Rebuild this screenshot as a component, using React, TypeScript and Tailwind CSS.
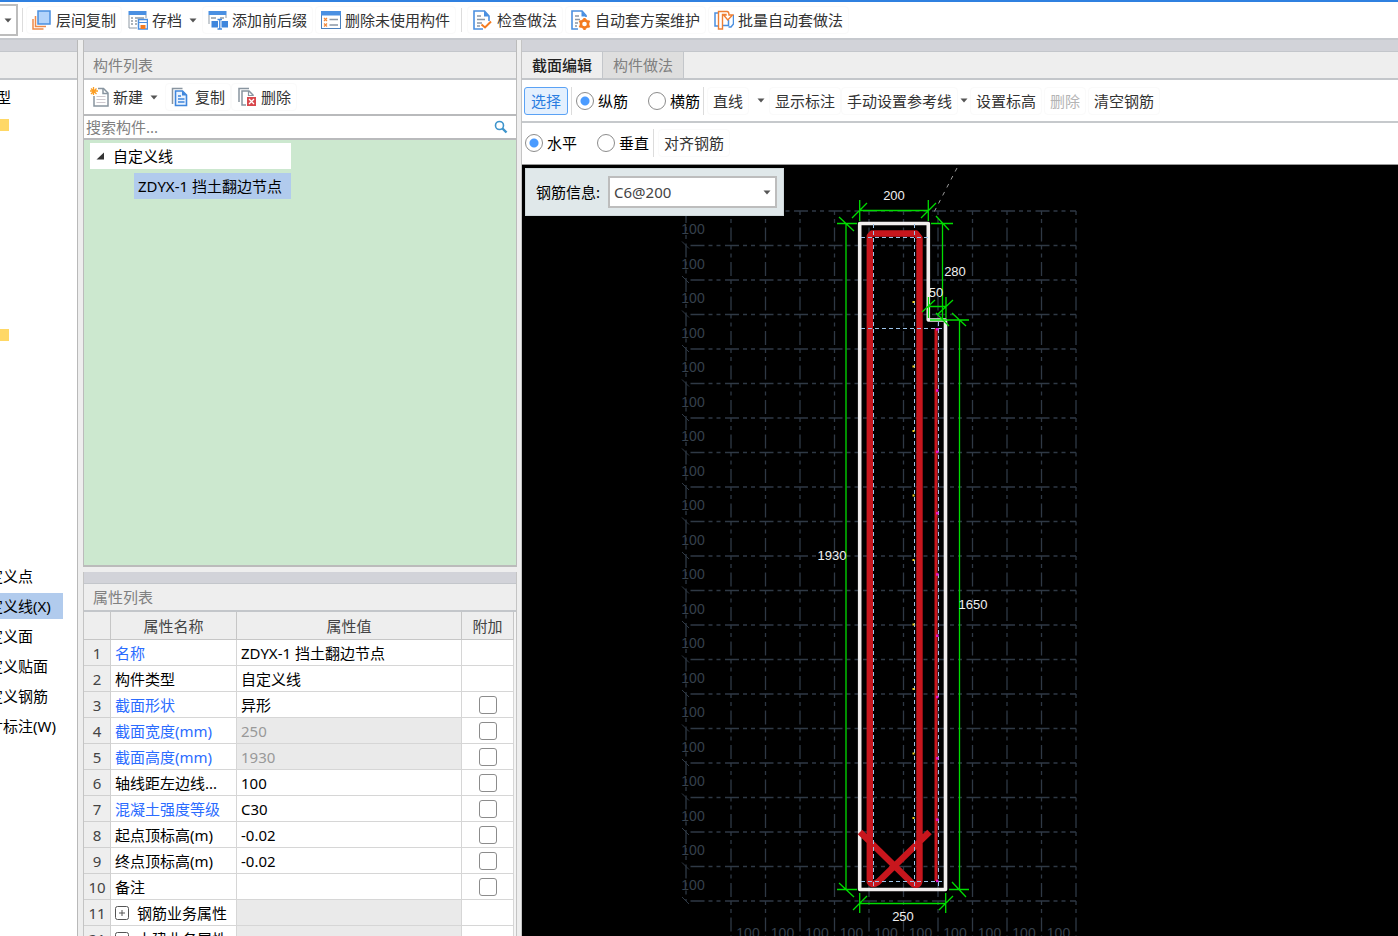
import { useState } from "react";
import type { ReactNode } from "react";

interface Property {
  id: number;
  name: string;
  value?: string;
  linked?: boolean;
  readOnly?: boolean;
  extra?: boolean;
  group?: boolean;
}

const properties: Property[] = [
  { id: 1, name: "名称", value: "ZDYX-1 挡土翻边节点", linked: true },
  { id: 2, name: "构件类型", value: "自定义线" },
  { id: 3, name: "截面形状", value: "异形", linked: true, extra: true },
  { id: 4, name: "截面宽度(mm)", value: "250", linked: true, readOnly: true, extra: true },
  { id: 5, name: "截面高度(mm)", value: "1930", linked: true, readOnly: true, extra: true },
  { id: 6, name: "轴线距左边线...", value: "100", extra: true },
  { id: 7, name: "混凝土强度等级", value: "C30", linked: true, extra: true },
  { id: 8, name: "起点顶标高(m)", value: "-0.02", extra: true },
  { id: 9, name: "终点顶标高(m)", value: "-0.02", extra: true },
  { id: 10, name: "备注", extra: true },
  { id: 11, name: "钢筋业务属性", group: true, readOnly: true },
  { id: 21, name: "土建业务属性", group: true, readOnly: true },
];

const customTypes = ["定义点", "定义线(X)", "定义面", "定义贴面", "定义钢筋", "寸标注(W)"];

function Caret() {
  return (
    <svg width="8" height="5" viewBox="0 0 8 5" className="shrink-0">
      <path d="M0.5 0.5h7L4 4.5z" fill="#555" />
    </svg>
  );
}

function Icon({ children }: { children: ReactNode }) {
  return (
    <svg width="20" height="20" viewBox="0 0 20 20" fill="none" className="shrink-0">
      {children}
    </svg>
  );
}

const LayerCopyIcon = () => (
  <Icon>
    <path d="M1 9v10h10.500M3.500 6v10.500h10.500" stroke="#ee8a4a" strokeWidth="1.5" />
    <rect x="6" y="1" width="12" height="13" fill="#b3d4fb" stroke="#4a8fe0" strokeWidth="1.5" />
  </Icon>
);

const ArchiveIcon = () => (
  <Icon>
    <rect x="0.5" y="1" width="18" height="4" fill="#4a90e2" />
    <path d="M1 5v13h8M18 5v3" stroke="#8f9aa5" />
    <path d="M3 8h2M7 8h9M3 11h2M7 11h2M3 14h2M7 14h2" stroke="#8f9aa5" strokeWidth="1.5" />
    <rect x="10.5" y="9.5" width="9" height="9.5" fill="#fff" stroke="#4a8fe0" strokeWidth="1.5" />
    <path d="M10.5 12.500h9" stroke="#4a8fe0" />
    <rect x="12.5" y="15" width="5" height="4" fill="#f47b20" />
  </Icon>
);

const PrefixIcon = () => (
  <Icon>
    <rect x="0.5" y="1" width="18" height="4" fill="#4a90e2" />
    <path d="M1 5v9M18 5v3" stroke="#8f9aa5" />
    <path d="M3 8h5M12 8h4" stroke="#8f9aa5" strokeWidth="1.5" />
    <rect x="3.5" y="11" width="6.5" height="6.5" fill="#3f86dc" />
    <rect x="13.500" y="11" width="6.5" height="6.5" fill="#3f86dc" />
    <path d="M9.5 9.5h4.5M11.75 9.500v9.5M9.5 19h4.5" stroke="#3f86dc" strokeWidth="1.3" />
  </Icon>
);

const UnusedIcon = () => (
  <Icon>
    <rect x="0.5" y="1.5" width="19" height="17" fill="#fff" stroke="#4a80bd" />
    <rect x="0" y="1" width="20" height="4.5" fill="#4a90e2" />
    <path d="M3 8l3 3m0-3l-3 3M3 13.5l3 3m0-3l-3 3" stroke="#f08a3c" strokeWidth="1.2" />
    <path d="M8.5 9.5H17M8.5 15H17" stroke="#8a97a5" strokeWidth="1.5" />
  </Icon>
);

const CheckDocIcon = () => (
  <Icon>
    <path d="M16 11V6l-4.5-5H1v18h9" stroke="#4a8fe0" strokeWidth="1.6" />
    <path d="M11 1v5.5h5z" fill="#4a8fe0" />
    <path d="M4 6h4M4 9.5h8M4 13h5M4 16h3" stroke="#8a97a5" strokeWidth="1.3" />
    <path d="M8.5 14.5l3.5 3 6-6" stroke="#f47b20" strokeWidth="2" />
  </Icon>
);

const GearDocIcon = () => (
  <Icon>
    <path d="M15 7V5.5L11 1H1v18h6" stroke="#4a8fe0" strokeWidth="1.6" />
    <path d="M10.5 1v5.5h5z" fill="#4a8fe0" />
    <path d="M4 6h4M4 9.5h5M4 13h3M4 16h2" stroke="#8a97a5" strokeWidth="1.3" />
    <circle cx="13.5" cy="14" r="3.600" stroke="#f47b20" strokeWidth="2.6" />
    <path
      d="M13.5 8v2.2M13.5 17.8V20M8.3 11l1.9 1.1M16.8 15.9l1.9 1.1M8.3 17l1.9-1.1M16.8 12.1l1.9-1.1"
      stroke="#f47b20"
      strokeWidth="2.4"
    />
  </Icon>
);

const BatchIcon = () => (
  <Icon>
    <path d="M4.500 3H1v13h3.500M14.500 17h2.500l2.500-3V5" stroke="#4a8fe0" strokeWidth="1.5" />
    <path d="M8.500 15.500h6V10" stroke="#4a8fe0" strokeWidth="1.500" />
    <path
      d="M4.500 1.500h8.500c1.500 0 2 1 2 3.500h3.500l-4.700 5-4.300-5h2.500V4.500H8.500V19h-4z"
      stroke="#ee7f33"
      strokeWidth="1.4"
      fill="#fff"
    />
  </Icon>
);

const NewIcon = () => (
  <Icon>
    <path d="M4 9v10h14V6l-4.5-4.5H8" stroke="#8995a0" strokeWidth="1.5" />
    <path d="M13 1.5V6.500h5" stroke="#8995a0" strokeWidth="1.5" />
    <path d="M6.5 9.5h9M6.5 12.5h9M6.5 15.5h9" stroke="#cfc9cf" />
    <path d="M3.5 0v8M0 4h8M1 1.5l5.5 5.5M6.5 1.500L1 7" stroke="#fb9e25" strokeWidth="1.3" />
  </Icon>
);

const CopyIcon = () => (
  <Icon>
    <path d="M1.500 17V1.5h10" stroke="#8995a0" strokeWidth="1.5" />
    <path d="M4.500 4h7l4 4v10.5h-11z" stroke="#3f86dc" strokeWidth="1.6" fill="#eaf3ff" />
    <path d="M11 4v4.500h4.5z" fill="#3f86dc" />
    <path d="M7 9h3M7 12h6.500M7 15h6.500" stroke="#3f86dc" strokeWidth="1.3" />
  </Icon>
);

const DeleteIcon = () => (
  <Icon>
    <path d="M2 15V1.5h10" stroke="#8995a0" strokeWidth="1.5" />
    <path d="M9 18H5V4h7l4 4v1" stroke="#8995a0" strokeWidth="1.5" />
    <path d="M11.5 4v4.5H16" stroke="#8995a0" strokeWidth="1.2" />
    <rect x="10" y="10" width="9" height="9" fill="#d9484d" />
    <path d="M12 12l5 5m0-5l-5 5" stroke="#fff" strokeWidth="1.3" />
  </Icon>
);

function ToolButton({ icon, label }: { icon: ReactNode; label: string }) {
  return (
    <button className="flex h-7 shrink-0 items-center gap-1 whitespace-nowrap rounded border border-[#fafafa] px-[5px] text-[#333]">
      {icon}
      {label}
    </button>
  );
}

function TextButton({ label, disabled }: { label: string; disabled?: boolean }) {
  return (
    <button
      disabled={disabled}
      className="h-7 shrink-0 whitespace-nowrap rounded border border-[#fafafa] px-[5px] text-[#333] disabled:text-[#b4b4b4]"
    >
      {label}
    </button>
  );
}

interface RadioProps {
  name: string;
  label: string;
  checked: boolean;
  onChange: () => void;
}

function Radio({ name, label, checked, onChange }: RadioProps) {
  return (
    <label className="flex shrink-0 items-center gap-1 whitespace-nowrap text-black">
      <input
        type="radio"
        name={name}
        checked={checked}
        onChange={onChange}
        className="size-[18px] appearance-none rounded-full border border-[#8c8c8c] bg-white checked:bg-[radial-gradient(circle,#4a9bff_0_4px,transparent_5px)]"
      />
      {label}
    </label>
  );
}

function PanelTitle({ children }: { children: ReactNode }) {
  return (
    <>
      <div className="h-3 shrink-0 border-b border-[#c3c6cb] bg-[#d2d3d9]" />
      <h2 className="h-7 shrink-0 border-b-2 border-[#c3c6ca] bg-[#eee] px-[9px] leading-[26px] text-[#808080]">
        {children}
      </h2>
    </>
  );
}

const STEP = 34.5;
const columns = Array.from({ length: 11 }, (_, i) => 731 + i * STEP);
const rows = Array.from({ length: 21 }, (_, i) => 211 + i * STEP);
const rebarDots = Array.from({ length: 9 }, (_, i) => 301 + i * 64.5);
const sideDots = Array.from({ length: 10 }, (_, i) => 328 + i * 61.3);

function SectionDrawing() {
  return (
    <svg className="block h-full w-full" fontFamily="'Liberation Sans', sans-serif" fontSize="13">
      <g transform="translate(-522 -165)" fill="none">
        {/* Grid */}
        <g stroke="#2f3945">
          {columns.map((x) => (
            <path
              key={x}
              d={`M${x} 211V936`}
              strokeWidth="1.3"
              strokeDasharray="14 4 4 4 4 4.5"
              strokeDashoffset="18"
            />
          ))}
          {rows.map((y) => (
            <path
              key={y}
              d={`M686 ${y}H1076`}
              strokeWidth="1.3"
              strokeDasharray="14 4 4 4 4 4.5"
              strokeDashoffset="30"
            />
          ))}
          <path d="M686 211V901" strokeWidth="1.3" strokeDasharray="14 4 4 4 4 4.5" strokeDashoffset="2" />
          {rows.map((y) => (
            <path key={y} d={`M682 ${y - 4}l7 7`} />
          ))}
        </g>
        <g fill="#36414d" fontSize="14" textAnchor="middle">
          {rows.slice(0, 20).map((y) => (
            <text key={y} x="693" y={y + 23}>
              100
            </text>
          ))}
          {columns.slice(0, 10).map((x) => (
            <text key={x} x={x + 17} y="938">
              100
            </text>
          ))}
        </g>
        <path d="M957 168L932 216" stroke="#9a9a9a" strokeDasharray="4 5" />

        {/* Section outline */}
        <path
          d="M859.7 223.5H928.3V320H945.5V889.5H859.7Z"
          stroke="#f1eeee"
          strokeWidth="3.6"
          strokeLinejoin="round"
        />

        {/* Rebar */}
        <path d="M936 328V881" stroke="#c8161d" strokeWidth="3" />
        <path
          d="M860 832L913 884Q919.5 887 919.5 879V238L916 233.5H872L869.8 236V882Q872 886 878 882L929.5 832"
          stroke="#c8161d"
          strokeWidth="6.4"
          strokeLinejoin="round"
        />

        {/* Cover lines */}
        <path
          d="M873.5 224V889M914.5 224V889M938.5 322V889M861 237.5H928M861 328.5H945M861 881.5H945"
          stroke="#9cc4ea"
          strokeDasharray="4 3"
        />
        {rebarDots.map((y) => (
          <rect key={y} x="912.500" y={y} width="2" height="2" fill="#f2cf1f" />
        ))}
        {sideDots.map((y) => (
          <rect key={y} x="936" y={y} width="2.500" height="2.500" fill="#e412c8" />
        ))}

        {/* Dimensions */}
        <g stroke="#00dc00" strokeWidth="1.3">
          <path d="M859.7 210.5H928.3M859.7 200V221M928.3 200V221M852 218L867 203M921 218L936 203" />
          <path d="M846 223V889.5M837 223.5H857M837 889.5H857M839 217L854 231M839 883L854 897" />
          <path d="M942.5 223V320M931 223.5H953M936 216L949 230M936 313L949 326" />
          <path d="M928.3 306.5H946M928.5 297V318M946 297V318M922 312L935 300M937 315L953 300" />
          <path d="M959.5 320V889.5M930 320H969M949 889.5H969M952 313L966 326M952 882L966 897" />
          <path d="M859.7 903.5H945.7M859.7 893V913M945.7 893V913M853 910L867 896M939 910L953 896" />
        </g>
        <g fill="#f0f0f0" textAnchor="middle">
          <text x="894" y="200">200</text>
          <text x="955" y="276">280</text>
          <text x="936" y="297">50</text>
          <text x="832" y="560">1930</text>
          <text x="973" y="609">1650</text>
          <text x="903" y="921">250</text>
        </g>
      </g>
    </svg>
  );
}

export default function App() {
  const [barType, setBarType] = useState("纵筋");
  const [direction, setDirection] = useState("水平");

  return (
    <div className="flex h-screen flex-col overflow-hidden bg-[#eee] font-['Noto_Sans','Noto_Sans_CJK_SC',sans-serif] text-[15px] leading-[22px] text-black">
      {/* Toolbar */}
      <header className="flex h-10 shrink-0 items-center gap-0.5 border-t-2 border-b-2 border-t-[#2f80e0] border-b-[#c6c9ce] bg-white">
        <button
          aria-label="楼层"
          className="flex h-8 w-[18px] items-center justify-center border-2 border-l-0 border-[#bdbdbd]"
        >
          <Caret />
        </button>
        <div className="mr-px ml-0.5 h-6 w-px bg-[#dcdcdc]" />
        <ToolButton icon={<LayerCopyIcon />} label="层间复制" />
        <div className="flex shrink-0">
          <button className="flex h-7 items-center gap-1 whitespace-nowrap px-1 text-[#333]">
            <ArchiveIcon />
            存档
          </button>
          <button aria-label="存档选项" className="flex w-3.5 items-center justify-center">
            <Caret />
          </button>
        </div>
        <ToolButton icon={<PrefixIcon />} label="添加前后缀" />
        <ToolButton icon={<UnusedIcon />} label="删除未使用构件" />
        <div className="mx-[3px] h-6 w-px bg-[#dcdcdc]" />
        <ToolButton icon={<CheckDocIcon />} label="检查做法" />
        <ToolButton icon={<GearDocIcon />} label="自动套方案维护" />
        <ToolButton icon={<BatchIcon />} label="批量自动套做法" />
      </header>

      <div className="flex min-h-0 flex-1">
        {/* Component types */}
        <nav className="flex w-[78px] shrink-0 flex-col overflow-hidden border-r border-[#b9b9b9]">
          <PanelTitle>&nbsp;</PanelTitle>
          <div className="flex-1 bg-white">
            <div className="-ml-1 pt-1.5">型</div>
            <div className="mt-[11px] h-3 w-[9px] bg-[#ffd866]" />
            <div className="mt-[198px] h-3 w-[9px] bg-[#ffd866]" />
            <ul className="mt-[222px] space-y-1">
              {customTypes.map((type) => (
                <li key={type}>
                  <a
                    href="#"
                    className={`flex h-[26px] w-[63px] items-center whitespace-nowrap ${
                      type === "定义线(X)" ? "bg-[#b1cbed]" : ""
                    }`}
                  >
                    <span className="-ml-3">{type}</span>
                  </a>
                </li>
              ))}
            </ul>
          </div>
        </nav>

        <div className="ml-[5px] flex w-[434px] shrink-0 flex-col">
          {/* Component list */}
          <section className="flex h-[527px] shrink-0 flex-col border-x border-b-2 border-[#bbb]">
            <PanelTitle>构件列表</PanelTitle>
            <div className="flex h-[34px] shrink-0 items-center bg-white">
              <button className="flex h-7 items-center gap-[3px] pl-1.5 text-[#333]">
                <NewIcon />
                新建
              </button>
              <button aria-label="新建选项" className="flex h-7 w-[22px] items-center justify-center">
                <Caret />
              </button>
              <ToolButton icon={<CopyIcon />} label="复制" />
              <ToolButton icon={<DeleteIcon />} label="删除" />
            </div>
            <div className="flex h-[26px] shrink-0 items-center border-y-2 border-[#b9babc] bg-white pr-2">
              <input
                aria-label="搜索构件"
                placeholder="搜索构件..."
                className="min-w-0 flex-1 px-0.5 outline-none placeholder:text-[#808080]"
              />
              <svg width="14" height="14" viewBox="0 0 14 14" fill="none" stroke="#3d94cc">
                <circle cx="5.5" cy="5.5" r="4" strokeWidth="1.6" />
                <path d="M8.5 8.5l4 4" strokeWidth="2.4" />
              </svg>
            </div>
            <div className="flex-1 bg-[#cce8cf] px-1.5 pt-[3px]">
              <div className="flex h-[26px] w-[201px] items-center gap-2 bg-white pl-1.5">
                <svg width="9" height="8" viewBox="0 0 9 8">
                  <path d="M8 0.5v7H0.5z" fill="#333" />
                </svg>
                自定义线
              </div>
              <div className="mt-1 ml-11 flex h-[26px] w-[157px] items-center whitespace-nowrap bg-[#b1cbed] pl-1">
                ZDYX-1 挡土翻边节点
              </div>
            </div>
          </section>

          {/* Property list */}
          <section className="mt-[5px] flex min-h-0 flex-1 flex-col overflow-hidden border-x border-[#c4c4c4]">
            <PanelTitle>属性列表</PanelTitle>
            <div className="min-h-0 flex-1 overflow-hidden bg-[#f4f4f4] pr-0.5">
              <table className="w-full table-fixed border-separate border-spacing-0 bg-white">
                <colgroup>
                  <col className="w-[27px]" />
                  <col className="w-[126px]" />
                  <col />
                  <col className="w-[52px]" />
                </colgroup>
                <thead>
                  <tr className="h-7 bg-[#eee] text-[#444]">
                    {["", "属性名称", "属性值", "附加"].map((title) => (
                      <th key={title} className="border-r border-b border-[#c6c6c6] p-0 font-normal">
                        {title}
                      </th>
                    ))}
                  </tr>
                </thead>
                <tbody>
                  {properties.map((prop) => (
                    <tr key={prop.id} className="h-[26px]">
                      <td className="border-r border-b border-[#d0d0d0] bg-[#eee] p-0 text-center text-[#444]">
                        {prop.id}
                      </td>
                      <td
                        className={`whitespace-nowrap border-r border-b border-[#d6d6d6] p-0 pl-1 ${
                          prop.linked ? "text-[#2b6cff]" : ""
                        }`}
                      >
                        {prop.group ? (
                          <button className="flex items-center gap-2">
                            <svg width="14" height="14" viewBox="0 0 14 14" fill="none" stroke="#555">
                              <rect x="0.5" y="0.5" width="13" height="13" rx="2" />
                              <path d="M4 7h6M7 4v6" />
                            </svg>
                            {prop.name}
                          </button>
                        ) : (
                          prop.name
                        )}
                      </td>
                      <td
                        className={`border-r border-b border-[#d6d6d6] p-0 pl-1 ${
                          prop.readOnly ? "bg-[#eaeaea] text-[#999]" : ""
                        }`}
                      >
                        {prop.value}
                      </td>
                      <td className="border-r border-b border-[#d6d6d6] p-0">
                        {prop.extra && (
                          <input
                            type="checkbox"
                            aria-label={`附加 ${prop.name}`}
                            className="mx-auto block size-[18px] appearance-none rounded-[3px] border border-[#8c8c8c] bg-white"
                          />
                        )}
                      </td>
                    </tr>
                  ))}
                </tbody>
              </table>
            </div>
          </section>
        </div>

        {/* Section editor */}
        <main className="ml-1 flex min-w-0 flex-1 flex-col border-l border-[#c4c4c4]">
          <div className="h-3 shrink-0 border-b border-[#c3c6cb] bg-[#d2d3d9]" />
          <div className="flex h-7 shrink-0 border-b-2 border-[#c3c6ca] leading-[26px]">
            <button className="border-r border-[#c3c6ca] px-2.5 font-medium text-[#222]">截面编辑</button>
            <button className="border-r border-[#c3c6ca] bg-[#dedede] px-2.5 text-[#808080]">构件做法</button>
          </div>
          <div className="flex h-[43px] shrink-0 items-center border-b-2 border-[#c6c9cc] bg-white pl-0.5">
            <button className="h-7 w-11 shrink-0 rounded-[3px] border border-[#5aa2f5] bg-[#e4f0fe] text-[#2a7de1]">
              选择
            </button>
            <div className="mr-1 ml-[3px] h-7 w-px bg-[#dcdcdc]" />
            <Radio name="bar" label="纵筋" checked={barType === "纵筋"} onChange={() => setBarType("纵筋")} />
            <div className="w-5" />
            <Radio name="bar" label="横筋" checked={barType === "横筋"} onChange={() => setBarType("横筋")} />
            <div className="mx-[3px] h-7 w-px bg-[#dcdcdc]" />
            <TextButton label="直线" />
            <button aria-label="直线选项" className="flex h-7 w-5 items-center justify-end pr-1">
              <Caret />
            </button>
            <TextButton label="显示标注" />
            <TextButton label="手动设置参考线" />
            <button aria-label="参考线选项" className="flex h-7 w-3 items-center justify-center">
              <Caret />
            </button>
            <div className="flex gap-0.5">
              <TextButton label="设置标高" />
              <TextButton label="删除" disabled />
              <TextButton label="清空钢筋" />
            </div>
          </div>
          <div className="flex h-[42px] shrink-0 items-center border-b border-[#999] bg-white pb-0.5 pl-[3px]">
            <Radio name="dir" label="水平" checked={direction === "水平"} onChange={() => setDirection("水平")} />
            <div className="w-5" />
            <Radio name="dir" label="垂直" checked={direction === "垂直"} onChange={() => setDirection("垂直")} />
            <div className="mx-1 h-7 w-px bg-[#dcdcdc]" />
            <TextButton label="对齐钢筋" />
          </div>
          <div className="relative min-h-0 flex-1 overflow-hidden bg-black">
            <SectionDrawing />
            <div className="absolute top-[3px] left-[3px] flex h-12 items-center gap-2 border border-[#cfd8da] bg-[#e0e8ea] pr-1.5 pl-2.5">
              <label htmlFor="rebar">钢筋信息:</label>
              <div className="relative">
                <select
                  id="rebar"
                  className="block h-8 w-[169px] appearance-none border-2 border-[#bdbdbd] bg-white pl-1 text-[#444]"
                >
                  <option>C6@200</option>
                </select>
                <span className="pointer-events-none absolute top-3.5 right-1.5">
                  <Caret />
                </span>
              </div>
            </div>
          </div>
        </main>
      </div>
    </div>
  );
}
